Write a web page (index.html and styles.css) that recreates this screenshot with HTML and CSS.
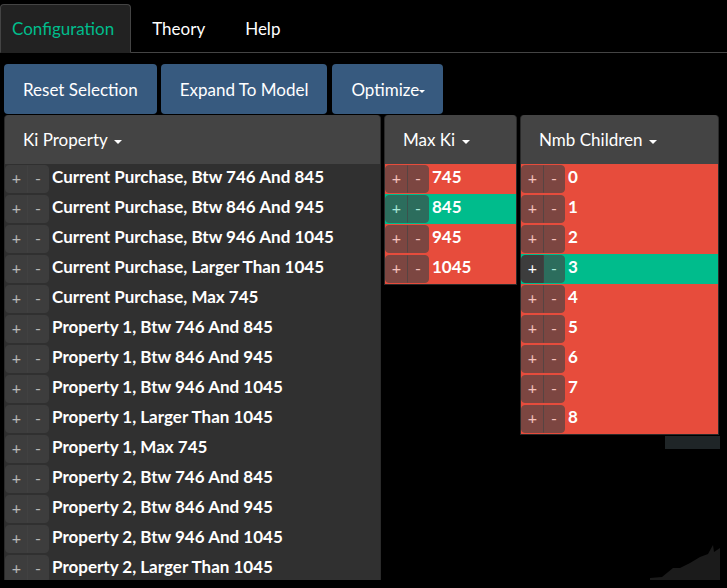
FILE: index.html
```html
<!DOCTYPE html>
<html>
<head>
<meta charset="utf-8">
<link rel="stylesheet" href="styles.css">
</head>
<body>
<div class="tabs">
  <a class="tab active">Configuration</a>
  <a class="tab">Theory</a>
  <a class="tab">Help</a>
</div>
<div class="toolbar">
  <button class="btn-primary">Reset Selection</button>
  <button class="btn-primary">Expand To Model</button>
  <button class="btn-primary btn-drop">Optimize<span class="caret tight"></span></button>
</div>
<div class="panels">
  <div class="panel panel-ki">
    <div class="panel-head">Ki Property <span class="caret"></span></div>
    <div class="panel-body limited">
      <div class="row"><div class="grp"><span class="b">+</span><span class="b">-</span></div><span class="lbl">Current Purchase, Btw 746 And 845</span></div>
      <div class="row"><div class="grp"><span class="b">+</span><span class="b">-</span></div><span class="lbl">Current Purchase, Btw 846 And 945</span></div>
      <div class="row"><div class="grp"><span class="b">+</span><span class="b">-</span></div><span class="lbl">Current Purchase, Btw 946 And 1045</span></div>
      <div class="row"><div class="grp"><span class="b">+</span><span class="b">-</span></div><span class="lbl">Current Purchase, Larger Than 1045</span></div>
      <div class="row"><div class="grp"><span class="b">+</span><span class="b">-</span></div><span class="lbl">Current Purchase, Max 745</span></div>
      <div class="row"><div class="grp"><span class="b">+</span><span class="b">-</span></div><span class="lbl">Property 1, Btw 746 And 845</span></div>
      <div class="row"><div class="grp"><span class="b">+</span><span class="b">-</span></div><span class="lbl">Property 1, Btw 846 And 945</span></div>
      <div class="row"><div class="grp"><span class="b">+</span><span class="b">-</span></div><span class="lbl">Property 1, Btw 946 And 1045</span></div>
      <div class="row"><div class="grp"><span class="b">+</span><span class="b">-</span></div><span class="lbl">Property 1, Larger Than 1045</span></div>
      <div class="row"><div class="grp"><span class="b">+</span><span class="b">-</span></div><span class="lbl">Property 1, Max 745</span></div>
      <div class="row"><div class="grp"><span class="b">+</span><span class="b">-</span></div><span class="lbl">Property 2, Btw 746 And 845</span></div>
      <div class="row"><div class="grp"><span class="b">+</span><span class="b">-</span></div><span class="lbl">Property 2, Btw 846 And 945</span></div>
      <div class="row"><div class="grp"><span class="b">+</span><span class="b">-</span></div><span class="lbl">Property 2, Btw 946 And 1045</span></div>
      <div class="row"><div class="grp"><span class="b">+</span><span class="b">-</span></div><span class="lbl">Property 2, Larger Than 1045</span></div>
    </div>
  </div>
  <div class="panel panel-max">
    <div class="panel-head">Max Ki <span class="caret"></span></div>
    <div class="panel-body">
      <div class="row ko"><div class="grp"><span class="b">+</span><span class="b">-</span></div><span class="lbl">745</span></div>
      <div class="row ok"><div class="grp"><span class="b">+</span><span class="b">-</span></div><span class="lbl">845</span></div>
      <div class="row ko"><div class="grp"><span class="b">+</span><span class="b">-</span></div><span class="lbl">945</span></div>
      <div class="row ko"><div class="grp"><span class="b">+</span><span class="b">-</span></div><span class="lbl">1045</span></div>
    </div>
  </div>
  <div class="col-nmb">
    <div class="panel panel-nmb">
      <div class="panel-head">Nmb Children <span class="caret"></span></div>
      <div class="panel-body">
        <div class="row ko"><div class="grp"><span class="b">+</span><span class="b">-</span></div><span class="lbl">0</span></div>
        <div class="row ko"><div class="grp"><span class="b">+</span><span class="b">-</span></div><span class="lbl">1</span></div>
        <div class="row ko"><div class="grp"><span class="b">+</span><span class="b">-</span></div><span class="lbl">2</span></div>
        <div class="row ok"><div class="grp"><span class="b on">+</span><span class="b">-</span></div><span class="lbl">3</span></div>
        <div class="row ko"><div class="grp"><span class="b">+</span><span class="b">-</span></div><span class="lbl">4</span></div>
        <div class="row ko"><div class="grp"><span class="b">+</span><span class="b">-</span></div><span class="lbl">5</span></div>
        <div class="row ko"><div class="grp"><span class="b">+</span><span class="b">-</span></div><span class="lbl">6</span></div>
        <div class="row ko"><div class="grp"><span class="b">+</span><span class="b">-</span></div><span class="lbl">7</span></div>
        <div class="row ko"><div class="grp"><span class="b">+</span><span class="b">-</span></div><span class="lbl">8</span></div>
      </div>
    </div>
    <div class="nub"></div>
  </div>
</div>
<svg class="bg-chart" width="80" height="45" viewBox="645 540 80 45">
  <polygon points="650,578 662,577 673,568 680,568 690,563 700,557 708,554 713,545 714,552 720,548 720,580 650,580" fill="#1b1b1b"/>
</svg>
</body>
</html>
```
FILE: styles.css
```css
html, body {
  margin: 0;
  padding: 0;
  background: #000;
  height: 100%;
  overflow: hidden;
}
body {
  font-family: Lato, "Open Sans", sans-serif;
  color: #fff;
  position: relative;
}
.tabs {
  display: flex;
  padding-top: 4px;
  border-bottom: 1px solid #444;
}
.tab {
  display: block;
  padding: 0 18px;
  line-height: 47px;
  font-size: 17px;
  color: #fff;
  border: 1px solid transparent;
  border-radius: 4px 4px 0 0;
  margin-bottom: -1px;
  margin-right: 2px;
}
.tab.active {
  background: #222;
  color: #00bc8c;
  border-color: #444 #444 transparent;
  padding: 0 16px 0 11px;
}
.toolbar {
  display: flex;
  gap: 4px;
  margin-top: 11px;
  padding-left: 4px;
}
.btn-primary {
  height: 50px;
  padding: 0 19px;
  background: #375a7f;
  color: #fff;
  border: 0;
  border-radius: 4px;
  font-family: inherit;
  font-size: 17px;
}
.btn-drop {
  margin-left: 1px;
  padding: 0 18px 0 19px;
}
.caret {
  display: inline-block;
  width: 0;
  height: 0;
  margin-left: 2px;
  vertical-align: middle;
  border-top: 4px solid #fff;
  border-left: 4px solid transparent;
  border-right: 4px solid transparent;
}
.caret.tight {
  margin-left: 0;
  border-top-width: 3px;
  border-left-width: 3px;
  border-right-width: 3px;
}
.panels {
  display: flex;
  align-items: flex-start;
  gap: 3px;
  margin-top: 1px;
  padding-left: 4px;
}
.panel {
  border: 1px solid #2a2a2a;
  border-top: 0;
  border-radius: 4px 4px 0 0;
  background: #303030;
}
.panel-ki { width: 377px; box-sizing: border-box; border-bottom: 0; }
.panel-max { width: 133px; box-sizing: border-box; }
.col-nmb { display: flex; flex-direction: column; align-items: flex-end; }
.panel-nmb { width: 199px; box-sizing: border-box; }
.nub {
  width: 55px;
  height: 13px;
  background: #1f2527;
  margin-right: -1px;
  margin-top: 1px;
}
.panel-head {
  height: 49px;
  line-height: 49px;
  background: #444;
  border-radius: 4px 4px 0 0;
  padding-left: 18px;
  font-size: 17px;
  color: #fff;
}
.panel-body.limited {
  max-height: 416px;
  overflow: hidden;
}
.row {
  display: flex;
  align-items: flex-start;
  box-sizing: border-box;
  height: 30px;
  padding-top: 1px;
}
.row.ko { background: #e74c3c; }
.row.ok { background: #00bc8c; }
.grp {
  display: flex;
  height: 28px;
}
.b {
  display: block;
  box-sizing: border-box;
  width: 23px;
  height: 28px;
  line-height: 24px;
  text-align: center;
  border: 1px solid #444;
  background: #444;
  opacity: 0.65;
  font-size: 16px;
  color: #fff;
}
.b:first-child {
  border-radius: 4px 0 0 4px;
}
.b + .b {
  margin-left: -1px;
  width: 22px;
  border-radius: 0 4px 4px 0;
}
.b.on { opacity: 1; background: #3d3d3d; border-color: #3d3d3d; }
.lbl {
  margin-left: 3px;
  font-size: 17px;
  line-height: 24px;
  font-weight: bold;
  color: #fff;
}
.bg-chart {
  position: absolute;
  left: 645px;
  top: 540px;
}
```
